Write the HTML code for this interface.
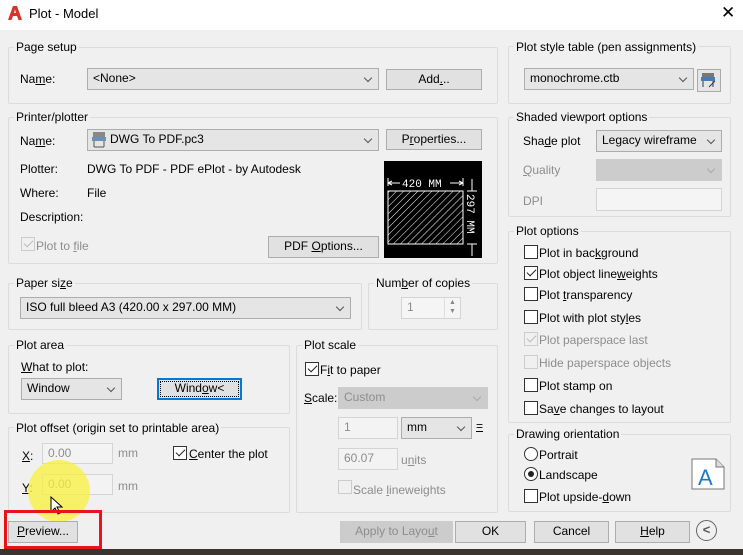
<!DOCTYPE html>
<html><head><meta charset="utf-8"><style>
*{box-sizing:border-box;margin:0;padding:0}
body{width:743px;height:555px;overflow:hidden;background:#f0f0f0;font-family:"Liberation Sans",sans-serif;font-size:12px;color:#000;position:relative}
.a{position:absolute;white-space:nowrap}
.g{position:absolute;border:1px solid #dcdcdc;border-radius:2px}
.gl{position:absolute;background:#f0f0f0;padding:0 2px;line-height:14px;white-space:nowrap}
.cb{position:absolute;background:#e5e5e5;border:1px solid #adadad;line-height:19px;padding-left:5px}
.cb::after{content:"";position:absolute;right:7px;top:6px;width:5px;height:5px;border-right:1px solid #555;border-bottom:1px solid #555;transform:rotate(45deg)}
.dis{background:#ccc;border-color:#ccc;color:#8d8d8d}
.dis::after{border-color:#aaa}
.btn{position:absolute;background:#e1e1e1;border:1px solid #adadad;text-align:center;line-height:19px}
.in{position:absolute;background:#f3f3f3;border:1px solid #d4d4d4;color:#8d8d8d;line-height:19px;padding-left:5px}
.ck{position:absolute;width:14px;height:14px;border:1px solid #333;background:#fff}
.ck.on::after{content:"";position:absolute;left:4px;top:0px;width:4px;height:8px;border-right:1.5px solid #222;border-bottom:1.5px solid #222;transform:rotate(45deg)}
.ck.d{border-color:#ccc;background:#f0f0f0}
.ck.d.on::after{border-color:#bbb}
.gr{color:#8d8d8d}
u{text-decoration:underline}
</style></head><body>
<div class="a" style="left:0;top:0;width:743px;height:30px;background:#fff"></div>
<svg class="a" style="left:7px;top:5px" width="16" height="16"><path d="M1 15 L6 1 H10 L15 15 H11.5 L10 11 H6 L4.5 15Z M7 8 H9 L8 4.5Z" fill="#d8332a" fill-rule="evenodd"/></svg>
<div class="a" style="left:29px;top:6px;font-size:13px">Plot - Model</div>
<div class="a" style="left:721px;top:3px;font-size:17px">✕</div>

<!-- Page setup -->
<div class="g" style="left:8px;top:47px;width:490px;height:57px"></div>
<div class="gl" style="left:14px;top:40px">Page setup</div>
<div class="a" style="left:20px;top:72px">Na<u>m</u>e:</div>
<div class="cb" style="left:87px;top:68px;width:292px;height:22px">&lt;None&gt;</div>
<div class="btn" style="left:386px;top:69px;width:96px;height:21px">Add<u>.</u>..</div>

<!-- Printer -->
<div class="g" style="left:8px;top:117px;width:490px;height:147px"></div>
<div class="gl" style="left:14px;top:110px">Printer/plotter</div>
<div class="a" style="left:20px;top:134px">Na<u>m</u>e:</div>
<div class="cb" style="left:87px;top:129px;width:292px;height:22px;padding-left:22px">DWG To PDF.pc3</div>
<svg class="a" style="left:91px;top:131px" width="16" height="17"><rect x="2" y="1" width="12" height="5" fill="#888"/><rect x="1" y="6" width="14" height="4" fill="#6b8fb5"/><path d="M3 10v6M13 10v6M3 16h10" stroke="#555" fill="none"/></svg>
<div class="btn" style="left:386px;top:129px;width:96px;height:21px">P<u>r</u>operties...</div>
<div class="a" style="left:20px;top:162px">Plotter:</div>
<div class="a" style="left:87px;top:162px">DWG To PDF - PDF ePlot - by Autodesk</div>
<div class="a" style="left:20px;top:186px">Where:</div>
<div class="a" style="left:87px;top:186px">File</div>
<div class="a" style="left:20px;top:210px">Description:</div>
<div class="ck d on" style="left:21px;top:237px"></div>
<div class="a gr" style="left:36px;top:239px">Plot to <u>f</u>ile</div>
<div class="btn" style="left:268px;top:236px;width:111px;height:22px">PDF <u>O</u>ptions...</div>
<svg class="a" style="left:384px;top:161px" width="98" height="97"><rect width="98" height="97" fill="#000"/>
<defs><pattern id="h" width="5" height="5" patternUnits="userSpaceOnUse" patternTransform="rotate(45)"><line x1="0" y1="0" x2="0" y2="5" stroke="#fff" stroke-width="1"/></pattern></defs>
<rect x="4" y="30" width="75" height="53" fill="url(#h)" stroke="#fff"/>
<path d="M4 17v8M79 17v8M4 22h12M66 22h13M4 22l4-2M4 22l4 2M79 22l-4-2M79 22l-4 2M83 30h10M83 83h10M88 18v12M88 83v12" stroke="#fff" fill="none"/>
<text x="18" y="26" fill="#fff" font-size="11" font-family="Liberation Mono">420 MM</text>
<text x="83" y="33" fill="#fff" font-size="11" font-family="Liberation Mono" transform="rotate(90 83 33)">297 MM</text></svg>

<!-- Paper size -->
<div class="g" style="left:8px;top:283px;width:354px;height:47px"></div>
<div class="gl" style="left:14px;top:276px">Paper si<u>z</u>e</div>
<div class="cb" style="left:20px;top:297px;width:331px;height:22px">ISO full bleed A3 (420.00 x 297.00 MM)</div>
<div class="g" style="left:368px;top:283px;width:130px;height:47px"></div>
<div class="gl" style="left:374px;top:276px">Num<u>b</u>er of copies</div>
<div class="in" style="left:401px;top:297px;width:60px;height:22px;background:#f5f5f5">1</div>
<div class="a" style="left:444px;top:298px;width:16px;height:20px;border-left:1px solid #ddd;font-size:7px;color:#888;text-align:center;line-height:9px">▲<br>▼</div>

<!-- Plot area -->
<div class="g" style="left:8px;top:345px;width:282px;height:69px"></div>
<div class="gl" style="left:14px;top:338px">Plot area</div>
<div class="a" style="left:21px;top:360px"><u>W</u>hat to plot:</div>
<div class="cb" style="left:21px;top:378px;width:101px;height:22px">Window</div>
<div class="btn" style="left:157px;top:378px;width:85px;height:22px;border:2px solid #0078d7;line-height:17px;outline:1px dotted #000;outline-offset:-4px">Wind<u>o</u>w&lt;</div>

<!-- Plot offset -->
<div class="g" style="left:8px;top:427px;width:282px;height:86px"></div>
<div class="gl" style="left:14px;top:421px">Plot offset (origin set to printable area)</div>
<div class="a gr" style="left:22px;top:449px;color:#000"><u>X</u>:</div>
<div class="in" style="left:42px;top:443px;width:71px;height:21px">0.00</div>
<div class="a gr" style="left:118px;top:446px">mm</div>
<div class="ck on" style="left:173px;top:446px"></div>
<div class="a" style="left:189px;top:447px"><u>C</u>enter the plot</div>
<div class="a" style="left:22px;top:481px"><u>Y</u>:</div>
<div class="in" style="left:42px;top:474px;width:71px;height:21px">0.00</div>
<div class="a gr" style="left:118px;top:479px">mm</div>

<!-- Plot scale -->
<div class="g" style="left:296px;top:345px;width:202px;height:168px"></div>
<div class="gl" style="left:302px;top:338px">Plot scale</div>
<div class="ck on" style="left:305px;top:362px"></div>
<div class="a" style="left:320px;top:363px">F<u>i</u>t to paper</div>
<div class="a" style="left:304px;top:391px"><u>S</u>cale:</div>
<div class="cb dis" style="left:338px;top:387px;width:150px;height:22px">Custom</div>
<div class="in" style="left:338px;top:417px;width:60px;height:22px">1</div>
<div class="cb" style="left:401px;top:417px;width:71px;height:22px">mm</div>
<div class="a" style="left:476px;top:419px;text-decoration:underline">=</div>
<div class="in" style="left:338px;top:448px;width:60px;height:22px">60.07</div>
<div class="a gr" style="left:401px;top:453px">u<u>n</u>its</div>
<div class="ck d" style="left:338px;top:480px"></div>
<div class="a gr" style="left:353px;top:483px">Scale <u>l</u>ineweights</div>

<!-- Right: plot style -->
<div class="g" style="left:508px;top:46px;width:223px;height:58px"></div>
<div class="gl" style="left:514px;top:40px">Plot style table (pen assi<u>g</u>nments)</div>
<div class="cb" style="left:524px;top:68px;width:170px;height:22px">monochrome.ctb</div>
<div class="a" style="left:697px;top:69px;width:24px;height:23px;border:1px solid #aaa;background:#e5e5e5"></div>
<svg class="a" style="left:700px;top:72px" width="18" height="17"><rect x="2" y="1" width="12" height="4" fill="#777"/><rect x="1" y="5" width="14" height="4" fill="#4a7ab0"/><path d="M3 9v6M13 9v6M9 15l6-6" stroke="#335" fill="none"/></svg>

<div class="g" style="left:508px;top:117px;width:223px;height:100px"></div>
<div class="gl" style="left:514px;top:110px">Shaded viewport options</div>
<div class="a" style="left:523px;top:134px">Sha<u>d</u>e plot</div>
<div class="cb" style="left:596px;top:130px;width:126px;height:22px">Legacy wireframe</div>
<div class="a gr" style="left:523px;top:163px"><u>Q</u>uality</div>
<div class="cb dis" style="left:596px;top:159px;width:126px;height:22px"></div>
<div class="a gr" style="left:523px;top:194px">DPI</div>
<div class="in" style="left:596px;top:188px;width:126px;height:23px;background:#f5f5f5"></div>

<div class="g" style="left:508px;top:231px;width:223px;height:192px"></div>
<div class="gl" style="left:514px;top:224px">Plot options</div>
<div class="ck" style="left:524px;top:245px"></div><div class="a" style="left:539px;top:246px">Plot in bac<u>k</u>ground</div>
<div class="ck on" style="left:524px;top:266px"></div><div class="a" style="left:539px;top:267px">Plot object line<u>w</u>eights</div>
<div class="ck" style="left:524px;top:287px"></div><div class="a" style="left:539px;top:288px">Plot <u>t</u>ransparency</div>
<div class="ck" style="left:524px;top:310px"></div><div class="a" style="left:539px;top:311px">Plot with plot sty<u>l</u>es</div>
<div class="ck d on" style="left:524px;top:332px"></div><div class="a gr" style="left:539px;top:333px">Plot paperspace last</div>
<div class="ck d" style="left:524px;top:355px"></div><div class="a gr" style="left:539px;top:356px">Hide paperspace ob<u>j</u>ects</div>
<div class="ck" style="left:524px;top:378px"></div><div class="a" style="left:539px;top:379px">Plot stamp on</div>
<div class="ck" style="left:524px;top:401px"></div><div class="a" style="left:539px;top:402px">Sa<u>v</u>e changes to layout</div>

<div class="g" style="left:508px;top:434px;width:223px;height:78px"></div>
<div class="gl" style="left:514px;top:427px">Drawing orientation</div>
<div class="a" style="left:524px;top:447px;width:14px;height:14px;border:1px solid #333;border-radius:50%;background:#fff"></div><div class="a" style="left:539px;top:448px">Portrait</div>
<div class="a" style="left:524px;top:467px;width:14px;height:14px;border:1px solid #333;border-radius:50%;background:#fff"><div style="margin:3px;width:6px;height:6px;border-radius:50%;background:#222"></div></div><div class="a" style="left:539px;top:468px">Landscape</div>
<div class="ck" style="left:524px;top:489px"></div><div class="a" style="left:539px;top:490px">Plot upside-<u>d</u>own</div>
<svg class="a" style="left:691px;top:458px" width="34" height="32"><path d="M1 1H25L33 9V31H1Z" fill="#fff" stroke="#777"/><path d="M25 1V9H33" fill="#ddd" stroke="#777"/><text x="7" y="27" fill="#1e78c8" font-size="22" font-family="Liberation Sans">A</text></svg>

<!-- bottom -->
<div class="a" style="left:28px;top:460px;width:62px;height:62px;border-radius:50%;background:rgba(250,240,60,0.75)"></div>
<svg class="a" style="left:50px;top:496px" width="14" height="20"><path d="M1 1V16L5 12L8 18L10 17L7 11H12Z" fill="#fff" stroke="#000"/></svg>
<div class="btn" style="left:8px;top:521px;width:70px;height:22px"><u>P</u>review...</div>
<div class="a" style="left:4px;top:510px;width:98px;height:39px;border:3px solid #e8141c"></div>
<div class="btn" style="left:340px;top:521px;width:113px;height:22px;background:#ccc;border-color:#ccc;color:#8d8d8d">Apply to Layo<u>u</u>t</div>
<div class="btn" style="left:455px;top:521px;width:71px;height:22px">OK</div>
<div class="btn" style="left:534px;top:521px;width:75px;height:22px">Cancel</div>
<div class="btn" style="left:615px;top:521px;width:75px;height:22px"><u>H</u>elp</div>
<div class="a" style="left:696px;top:520px;width:21px;height:21px;border:1.5px solid #666;border-radius:50%;text-align:center;line-height:18px;font-size:13px;font-weight:bold;color:#555">&lt;</div>
<div class="a" style="left:0;top:549px;width:743px;height:6px;background:#3a3430"></div>
</body></html>
